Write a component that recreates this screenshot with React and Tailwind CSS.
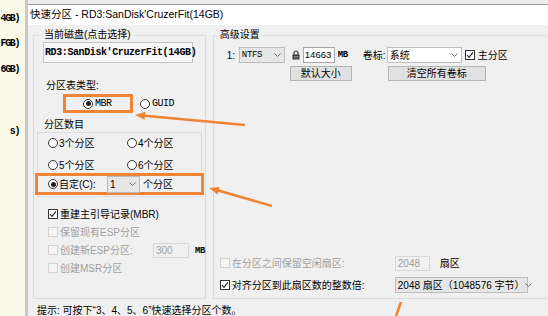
import React from "react";

const orange = "border-[#ee8434]";

const Chevron = () => (
  <svg width="7" height="4" viewBox="0 0 7 4" className="shrink-0">
    <path d="M0.5 0.5 L3.5 3.5 L6.5 0.5" stroke="#707070" strokeWidth="1" fill="none" />
  </svg>
);

const Radio = ({ checked }) => (
  <span className="w-[10px] h-[10px] rounded-full border border-[#333] bg-white flex items-center justify-center shrink-0">
    {checked && <span className="w-[5px] h-[5px] rounded-full bg-[#222]" />}
  </span>
);

const Check = ({ checked, disabled }) => (
  <span
    className={`w-[10px] h-[10px] border shrink-0 flex items-center justify-center ${
      disabled ? "border-[#d2d2d2] bg-[#f5f5f5]" : "border-[#333] bg-white"
    }`}
  >
    {checked && (
      <svg width="8" height="8" viewBox="0 0 8 8">
        <path d="M1 4 L3 6.3 L7 1.4" stroke="#222" strokeWidth="1.1" fill="none" />
      </svg>
    )}
  </span>
);

const Combo = ({ children, className = "", white }) => (
  <div
    className={`flex items-center justify-between h-[16px] border border-[#bcbcbc] pl-[2px] pr-[3px] ${
      white ? "bg-white" : "bg-[#e6e6e6]"
    } ${className}`}
  >
    <span className="whitespace-nowrap">{children}</span>
    <Chevron />
  </div>
);

const Lock = () => (
  <svg width="8" height="10" viewBox="0 0 8 10" className="shrink-0">
    <path d="M2 4.5 V3 a2 2 0 0 1 4 0 V4.5" stroke="#333" strokeWidth="1.2" fill="none" />
    <rect x="0.5" y="4.5" width="7" height="5" fill="#333" />
    <rect x="1.5" y="6" width="5" height="0.8" fill="#999" />
    <rect x="1.5" y="7.6" width="5" height="0.8" fill="#999" />
  </svg>
);

const mono = "font-['Liberation_Mono',monospace]";

const stripLines = [
  { text: "4GB)", mt: "mt-[12px]" },
  { text: "FGB)", mt: "mt-[11px]" },
  { text: "6GB)", mt: "mt-[12px]" },
  { text: "s)", mt: "mt-[48px]" },
];

export default function App() {
  return (
    <div className="relative flex w-[548px] h-[316px] overflow-hidden bg-[#f0f0f0] text-[10px] text-black font-['Liberation_Sans','Noto_Sans_CJK_SC',sans-serif]">
      {/* list behind the dialog */}
      <div className="w-[28px] shrink-0 bg-[#fcfae9] border-r-[3px] border-[#c8c8c8] flex flex-col items-end">
        {stripLines.map((l) => (
          <div
            key={l.text}
            className={`${l.mt} leading-[14px] pr-[6px] whitespace-nowrap font-bold text-[10px] tracking-[-1.4px] ${mono}`}
          >
            {l.text}
          </div>
        ))}
      </div>

      {/* dialog */}
      <div className="flex-1 flex flex-col min-w-0">
        <div className="h-[5px] shrink-0 bg-[#ececec] border-b border-[#9a9a9a]" />
        <div className="h-[20px] shrink-0 bg-white pl-[2px] flex items-center text-[10.5px] whitespace-nowrap">
          快速分区 - RD3:SanDisk'CruzerFit(14GB)
        </div>

        <div className="flex-1 flex flex-col">
          <div className="flex">
            {/* left group */}
            <fieldset className="ml-[5px] mt-[3px] w-[171px] h-[271px] shrink-0 border border-[#dcdcdc]">
              <legend className="ml-[7px] px-[3px] leading-[14px]">当前磁盘(点击选择)</legend>
              <div
                className={`ml-[9px] w-[150px] h-[21px] border border-[#c4c4c4] bg-[#f7f7f7] flex items-center pl-[1px] font-bold text-[10px] tracking-[-0.4px] whitespace-nowrap ${mono}`}
              >
                RD3:SanDisk'CruzerFit(14GB)
              </div>

              <div className="ml-[12px] mt-[16px] leading-[14px]">分区表类型:</div>
              <div className="flex items-center mt-[1px] ml-[29px] gap-[7px]">
                <div className={`w-[70px] h-[19px] border-[3px] ${orange} flex items-center pl-[17px] gap-[2px]`}>
                  <Radio checked />
                  <span className={`${mono} text-[10px] tracking-[-0.5px]`}>MBR</span>
                </div>
                <div className="flex items-center gap-[2px]">
                  <Radio />
                  <span className={`${mono} text-[10px] tracking-[-0.5px]`}>GUID</span>
                </div>
              </div>

              <div className="ml-[10px] mt-[5px] leading-[14px]">分区数目</div>
              <div className="ml-[3px] w-[165px] border border-[#dcdcdc] pt-[3px] pb-[1px]">
                <div className="grid grid-cols-[79px_1fr] pl-[10px] gap-y-[8px]">
                  {["3个分区", "4个分区", "5个分区", "6个分区"].map((t) => (
                    <div key={t} className="flex items-center h-[14px] gap-[1px]">
                      <Radio />
                      <span>{t}</span>
                    </div>
                  ))}
                </div>
                <div className={`mt-[1px] -mx-[3px] h-[22px] border-[3px] ${orange} flex items-center pl-[10px]`}>
                  <Radio checked />
                  <span className="ml-[1px] w-[48px]">自定(C):</span>
                  <Combo className="w-[33px] h-[17px]">1</Combo>
                  <span className="ml-[3px]">个分区</span>
                </div>
              </div>

              <div className="ml-[14px] mt-[8px] flex flex-col">
                <div className="h-[18px] flex items-center gap-[2px]">
                  <Check checked />
                  <span>重建主引导记录(MBR)</span>
                </div>
                <div className="h-[18px] flex items-center gap-[2px] text-[#a0a0a0]">
                  <Check disabled />
                  <span>保留现有ESP分区</span>
                </div>
                <div className="h-[18px] flex items-center gap-[2px] text-[#a0a0a0]">
                  <Check disabled />
                  <span className="w-[91px]">创建新ESP分区:</span>
                  <div className="w-[36px] h-[15px] border border-[#d8d8d8] bg-[#f0f0f0] pl-[2px] flex items-center">300</div>
                  <span className={`ml-[4px] pt-[3px] text-black ${mono} text-[9px] tracking-[-0.5px] font-bold`}>MB</span>
                </div>
                <div className="h-[18px] flex items-center gap-[2px] text-[#a0a0a0]">
                  <Check disabled />
                  <span>创建MSR分区</span>
                </div>
              </div>
            </fieldset>

            {/* right group */}
            <fieldset className="ml-[7px] mt-[3px] w-[360px] h-[271px] shrink-0 border border-[#dcdcdc]">
              <legend className="ml-[3px] px-[3px] leading-[14px]">高级设置</legend>
              <div className="mt-[5px] h-[16px] flex items-center pl-[13px]">
                <span className="w-[12px]">1:</span>
                <Combo className={`w-[46px] ${mono}`}>
                  <span className="text-[9px] tracking-[-0.3px]">NTFS</span>
                </Combo>
                <span className="ml-[7px]">
                  <Lock />
                </span>
                <div className="ml-[3px] w-[32px] h-[16px] border border-[#a8a8a8] bg-white pl-[1px] flex items-center text-[9.5px]">
                  14663
                </div>
                <span className={`ml-[3px] pt-[2px] w-[25px] ${mono} text-[9px] tracking-[-0.5px] font-bold`}>MB</span>
                <span className="w-[24px]">卷标:</span>
                <Combo white className="w-[75px]">系统</Combo>
                <span className="ml-[3px]">
                  <Check checked />
                </span>
                <span className="ml-[3px]">主分区</span>
              </div>

              <div className="mt-[3px] h-[15px] flex pl-[76px]">
                <button className="w-[62px] h-[15px] border border-[#b4b4b4] bg-[#e1e1e1] flex items-center justify-center leading-none">
                  默认大小
                </button>
                <button className="ml-[36px] w-[98px] h-[15px] border border-[#b4b4b4] bg-[#e1e1e1] flex items-center justify-center leading-none">
                  清空所有卷标
                </button>
              </div>

              <div className="mt-[174px] h-[16px] flex items-center pl-[6px] text-[#a0a0a0]">
                <Check disabled />
                <span className="ml-[2px] w-[163px]">在分区之间保留空闲扇区:</span>
                <div className="w-[35px] h-[15px] border border-[#d8d8d8] bg-[#f0f0f0] pl-[2px] flex items-center">2048</div>
                <span className="ml-[10px] text-black">扇区</span>
              </div>
              <div className="mt-[6px] h-[16px] flex items-center pl-[6px]">
                <Check checked />
                <span className="ml-[2px] w-[163px]">对齐分区到此扇区数的整数倍:</span>
                <Combo className="w-[133px]">2048 扇区（1048576 字节）</Combo>
              </div>
            </fieldset>
          </div>

          <div className="mt-[5px] pl-[9px] leading-[14px] whitespace-nowrap">
            提示: 可按下“3、4、5、6”快速选择分区个数。
          </div>
        </div>
      </div>

      {/* annotation arrows drawn over the screenshot */}
      <svg className="absolute inset-0 pointer-events-none" width="548" height="316" viewBox="0 0 548 316">
        <line x1="245" y1="125" x2="142" y2="115.5" stroke="#ee8434" strokeWidth="2.5" />
        <polygon points="135,115 145.4,111.7 144.6,119.7" fill="#ee8434" />
        <line x1="272" y1="206" x2="214" y2="189.2" stroke="#ee8434" strokeWidth="2.5" />
        <polygon points="209,188 219.7,187 217.5,194.6" fill="#ee8434" />
        <line x1="401" y1="302" x2="396" y2="316" stroke="#ee8434" strokeWidth="2.5" />
      </svg>
    </div>
  );
}
